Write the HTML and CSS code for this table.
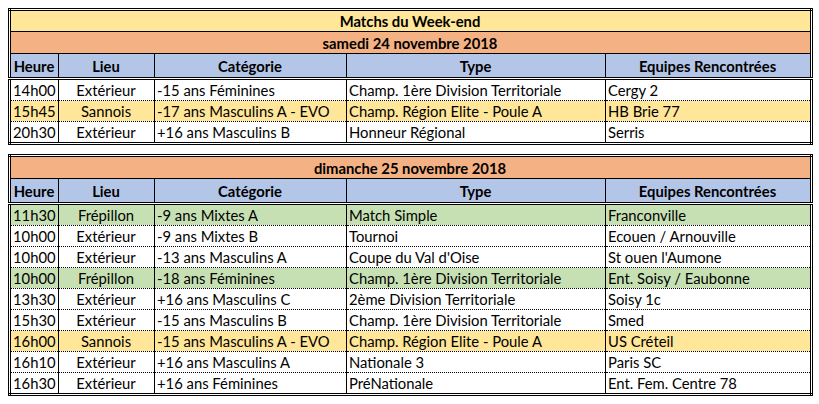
FILE: index.html
```html
<!DOCTYPE html>
<html lang="fr">
<head>
<meta charset="utf-8">
<title>Matchs du Week-end</title>
<link rel="stylesheet" href="styles.css">
</head>
<body>
<table class="sched">
  <colgroup><col class="c1"><col class="c2"><col class="c3"><col class="c4"><col class="c5"></colgroup>
  <tr class="title"><td colspan="5">Matchs du Week-end</td></tr>
  <tr class="date"><td colspan="5">samedi 24 novembre 2018</td></tr>
  <tr class="head"><th>Heure</th><th>Lieu</th><th>Catégorie</th><th>Type</th><th>Equipes Rencontrées</th></tr>
  <tr class="first"><td>14h00</td><td class="ctr">Extérieur</td><td>-15 ans Féminines</td><td>Champ. 1ère Division Territoriale</td><td>Cergy 2</td></tr>
  <tr class="yel"><td>15h45</td><td class="ctr">Sannois</td><td>-17 ans Masculins A - EVO</td><td>Champ. Région Elite - Poule A</td><td>HB Brie 77</td></tr>
  <tr><td>20h30</td><td class="ctr">Extérieur</td><td>+16 ans Masculins B</td><td>Honneur Régional</td><td>Serris</td></tr>
</table>
<table class="sched">
  <colgroup><col class="c1"><col class="c2"><col class="c3"><col class="c4"><col class="c5"></colgroup>
  <tr class="date"><td colspan="5">dimanche 25 novembre 2018</td></tr>
  <tr class="head"><th>Heure</th><th>Lieu</th><th>Catégorie</th><th>Type</th><th>Equipes Rencontrées</th></tr>
  <tr class="first grn"><td>11h30</td><td class="ctr">Frépillon</td><td>-9 ans Mixtes A</td><td>Match Simple</td><td>Franconville</td></tr>
  <tr><td>10h00</td><td class="ctr">Extérieur</td><td>-9 ans Mixtes B</td><td>Tournoi</td><td>Ecouen / Arnouville</td></tr>
  <tr><td>10h00</td><td class="ctr">Extérieur</td><td>-13 ans Masculins A</td><td>Coupe du Val d'Oise</td><td>St ouen l'Aumone</td></tr>
  <tr class="grn"><td>10h00</td><td class="ctr">Frépillon</td><td>-18 ans Féminines</td><td>Champ. 1ère Division Territoriale</td><td>Ent. Soisy / Eaubonne</td></tr>
  <tr><td>13h30</td><td class="ctr">Extérieur</td><td>+16 ans Masculins C</td><td>2ème Division Territoriale</td><td>Soisy 1c</td></tr>
  <tr><td>15h30</td><td class="ctr">Extérieur</td><td>-15 ans Masculins B</td><td>Champ. 1ère Division Territoriale</td><td>Smed</td></tr>
  <tr class="yel"><td>16h00</td><td class="ctr">Sannois</td><td>-15 ans Masculins A - EVO</td><td>Champ. Région Elite - Poule A</td><td>US Créteil</td></tr>
  <tr><td>16h10</td><td class="ctr">Extérieur</td><td>+16 ans Masculins A</td><td>Nationale 3</td><td>Paris SC</td></tr>
  <tr><td>16h30</td><td class="ctr">Extérieur</td><td>+16 ans Féminines</td><td>PréNationale</td><td>Ent. Fem. Centre 78</td></tr>
</table>
</body>
</html>
```
FILE: styles.css
```css
html, body {
  margin: 0;
  background: #ffffff;
}
body {
  padding: 8px;
  font-family: Lato, "Open Sans", sans-serif;
  font-size: 14.8px;
  color: #000;
}
.sched {
  width: 802px;
  table-layout: fixed;
  border-collapse: collapse;
  border: 3px double #000;
  margin-bottom: 9px;
}
.c1 { width: 49px; }
.c2 { width: 96px; }
.c3 { width: 192px; }
.c4 { width: 259px; }
.c5 { width: 206px; }
.sched td, .sched th {
  height: 20px;
  padding: 0 3px 0 2px;
  line-height: 20px;
  white-space: nowrap;
  overflow: hidden;
  border-left: 1px solid #000;
  border-right: 1px solid #000;
  border-top: 1px dotted #000;
  border-bottom: 1px dotted #000;
  text-align: left;
}
.sched .ctr { text-align: center; }
.title td {
  background: #ffe699;
  font-weight: bold;
  text-align: center;
  border: 1px solid #000;
}
.date td {
  background: #f4b183;
  font-weight: bold;
  text-align: center;
  border: 1px solid #000;
  height: 21px;
}
.head th {
  background: #b4c6e7;
  font-weight: bold;
  text-align: center;
  border: 1px solid #000;
  height: 23px;
}
.first td { border-top: 3px double #000; }
.yel td { background: #ffe699; }
.grn td { background: #c6e0b4; }
```
